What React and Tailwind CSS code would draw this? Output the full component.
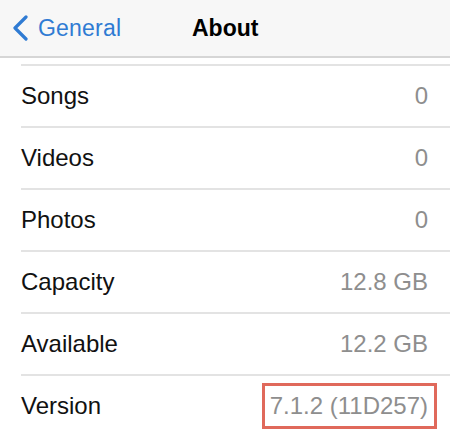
import React from "react";

const rows = [
  ["Songs", "0"],
  ["Videos", "0"],
  ["Photos", "0"],
  ["Capacity", "12.8 GB"],
  ["Available", "12.2 GB"],
];

export default function App() {
  return (
    <div
      className="w-[450px] h-[434px] overflow-hidden bg-white"
      style={{ fontFamily: '"Liberation Sans", Arial, sans-serif' }}
    >
      <div className="h-[58px] bg-[#f7f7f7] border-b-2 border-[#d6d6d6] flex items-center relative">
        <div className="flex items-center pl-[12px] text-[#2f7bd3] text-[23px] tracking-[0.2px]">
          <svg width="17" height="26" viewBox="0 0 17 26" className="mr-[9px]">
            <path d="M14 2 L3 13 L14 24" fill="none" stroke="#2f7bd3" strokeWidth="3.2" strokeLinecap="round" strokeLinejoin="round" />
          </svg>
          <span>General</span>
        </div>
        <div className="absolute left-[192px] top-0 h-full flex items-center text-[23px] font-bold text-black">
          About
        </div>
      </div>
      <div className="pt-[6px]">
        {rows.map(([label, value]) => (
          <div key={label} className="pl-[21px]">
            <div className="h-[62px] border-t-2 border-[#e3e3e3] flex items-center justify-between pr-[22px] text-[24px]">
              <span className="text-[#111]">{label}</span>
              <span className="text-[#8e8e8e]">{value}</span>
            </div>
          </div>
        ))}
        <div className="pl-[21px]">
          <div className="h-[62px] border-t-2 border-[#e3e3e3] flex items-center justify-between pr-[22px] text-[24px]">
            <span className="text-[#111]">Version</span>
            <span className="text-[#8e8e8e] border-[3px] border-[#e0695b] pl-[5px] pr-[6px] -mr-[9px] h-[46px] flex items-center">
              7.1.2 (11D257)
            </span>
          </div>
        </div>
      </div>
    </div>
  );
}
